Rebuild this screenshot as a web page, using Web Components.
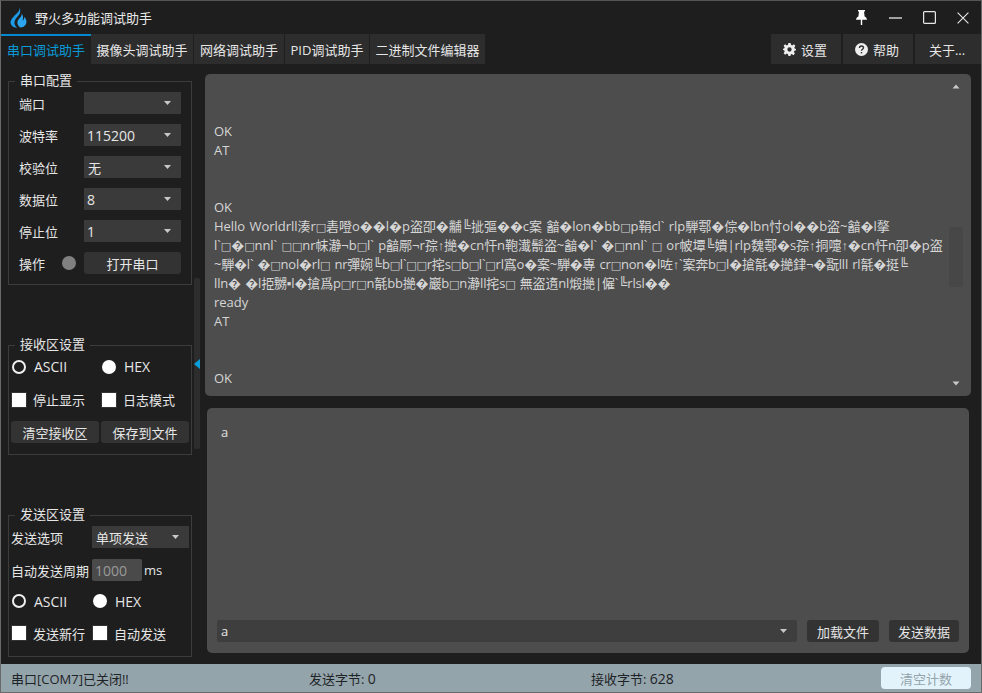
<!DOCTYPE html>
<html lang="zh"><head><meta charset="utf-8"><title>野火多功能调试助手</title>
<style>
html,body{margin:0;padding:0;height:100%;background:#1e1e1e;overflow:hidden}
body{font:13px "Open Sans","Noto Sans CJK SC",sans-serif;color:#e6e6e6}
</style></head><body>
<app-window>
  <title-bar slot="title">野火多功能调试助手</title-bar>
  <tab-bar slot="tabs"></tab-bar>
  <side-bar slot="side">
    <side-group label="串口配置" h="204">
      <form-grid cols="65px 97px" gap="10">
        <span>端口</span><combo-box></combo-box>
        <span>波特率</span><combo-box num>115200</combo-box>
        <span>校验位</span><combo-box>无</combo-box>
        <span>数据位</span><combo-box num>8</combo-box>
        <span>停止位</span><combo-box num>1</combo-box>
        <status-op>操作</status-op><action-btn>打开串口</action-btn>
      </form-grid>
    </side-group>
    <side-group label="接收区设置" h="110" top="60" pad="4">
      <opt-row first="90" h="33"><radio-opt ring>ASCII</radio-opt><radio-opt>HEX</radio-opt></opt-row>
      <opt-row first="90" h="33"><check-opt>停止显示</check-opt><check-opt>日志模式</check-opt></opt-row>
      <btn-row><action-btn>清空接收区</action-btn><action-btn>保存到文件</action-btn></btn-row>
    </side-group>
    <side-group label="发送区设置" h="142" top="60" pad="10">
      <send-row><span>发送选项</span><combo-box>单项发送</combo-box></send-row>
      <send-row last><span>自动发送周期</span><num-input>1000</num-input><span class="ms">ms</span></send-row>
      <opt-row first="81" h="32"><radio-opt ring>ASCII</radio-opt><radio-opt>HEX</radio-opt></opt-row>
      <opt-row first="81" h="32"><check-opt>发送新行</check-opt><check-opt>自动发送</check-opt></opt-row>
    </side-group>
  </side-bar>
  <recv-panel slot="recv"></recv-panel>
  <send-panel slot="send"></send-panel>
  <status-bar slot="status"></status-bar>
</app-window>
<script>
function def(name, css, html, init){
  customElements.define(name, class extends HTMLElement{
    constructor(){super();const r=this.attachShadow({mode:'open'});r.innerHTML='<style>'+css+'</style>'+(typeof html==='function'?html(this):html);}
    connectedCallback(){ if(init) init(this); }
  });
}
const caret='<svg width="7" height="4" viewBox="0 0 7 4"><path d="M0 0h7L3.500 4z" fill="#c8c8c8"/></svg>';

def('app-window',`
:host{display:flex;flex-direction:column;box-sizing:border-box;width:982px;height:693px;border:1px solid #6a6a6a;border-top-color:#555;background:#1e1e1e}
.main{flex:1;display:flex;min-height:0}
.content{flex:1;display:flex;flex-direction:column;min-width:0}
`,`<slot name="title"></slot><slot name="tabs"></slot>
<div class="main"><slot name="side"></slot><div class="content"><slot name="recv"></slot><slot name="send"></slot></div></div>
<slot name="status"></slot>`);

def('title-bar',`
:host{display:flex;align-items:center;height:33px;background:#1e1e1e;color:#e8e8e8;font-size:13px;padding-right:1px}
.logo{margin:0 8px 0 9px;display:block}
.t{flex:1}
.b{width:34px;height:33px;display:flex;align-items:center;justify-content:center}
.b svg{display:block}
`,`<svg class="logo" width="17" height="21" viewBox="0 0 17 21"><path d="M9.600 0C10.300 3.600 7.600 5.400 4.600 8.600 1.600 11.600 0 14 .6 16.400 1.400 19.200 4 20.800 7.600 20.800 4.800 19 3.400 15.800 5.400 12.400 6.800 10 9.800 8.200 10.200 4.800 10.400 3 10.200 1.400 9.600 0z" fill="#1d9be6"/><path d="M11.600 6.200C12.400 9.400 9.400 10.800 8 13.200 6.600 15.600 7.800 19 10.600 20.600 14.200 20.200 16.800 17.400 16.400 14 16.200 12.400 15.400 11 14.200 9.800 14.400 11.600 13.800 13 12.600 13.600 13.400 11 13.200 8.200 11.600 6.200z" fill="#2aa5ee"/></svg>
<span class="t"><slot></slot></span>
<span class="b"><svg width="11" height="15" viewBox="0 0 11 15"><path d="M2 0h7v1.500H8L8.600 6.500C10 7.200 10.800 8.200 11 9.800H6.200V15H4.800V9.800H0C.2 8.200 1 7.200 2.400 6.500L3 1.500H2z" fill="#fff"/></svg></span>
<span class="b"><svg width="13" height="2" viewBox="0 0 13 2"><path d="M0 1h13" stroke="#e8e8e8" stroke-width="1.300"/></svg></span>
<span class="b"><svg width="13" height="13" viewBox="0 0 13 13"><rect x=".6" y=".6" width="11.800" height="11.800" rx="1" fill="none" stroke="#e8e8e8" stroke-width="1.200"/></svg></span>
<span class="b"><svg width="12" height="12" viewBox="0 0 12 12"><path d="M.6.6l10.800 10.800M11.400.6L.6 11.400" stroke="#e8e8e8" stroke-width="1.100"/></svg></span>`);

def('tab-bar',`
:host{display:flex;height:31px;background:#1e1e1e;gap:1px;color:#e6e6e6}
.tab{display:flex;align-items:center;justify-content:center;background:#2d2d2d;height:30px;box-sizing:border-box;flex:none}
.on{width:90px;background:#1e1e1e;color:#0a9ad8;border-top:2px solid #0288d1;margin-right:-1px;padding-bottom:1px}
.sp{flex:1}
.r{gap:5px}
svg{display:block}
`,`<div class="tab on">串口调试助手</div>
<div class="tab" style="width:102px">摄像头调试助手</div>
<div class="tab" style="width:90px">网络调试助手</div>
<div class="tab" style="width:84px">PID调试助手</div>
<div class="tab" style="width:115px">二进制文件编辑器</div>
<div class="sp"></div>
<div class="tab r" style="width:70px;margin-right:1px;padding-right:2px"><svg width="13" height="13" viewBox="0 0 24 24"><path fill="#efefef" fill-rule="evenodd" d="M10 0h4l.7 3.400 2.300 1 3-1.900 2.800 2.800-1.900 3 1 2.300L25 11v2l-3.900 1.300-1 2.300 1.900 3-2.800 2.800-3-1.900-2.300 1L14 24h-4l-.7-3.400-2.300-1-3 1.900-2.800-2.800 1.900-3-1-2.300L-1 13v-2l3.100-.7 1-2.300-1.900-3L4 2.500l3 1.900 2.300-1zM12 8a4 4 0 100 8 4 4 0 000-8z"/></svg>设置</div>
<div class="tab r" style="width:70px;margin-right:1px;padding-right:2px"><svg width="13" height="13" viewBox="0 0 13 13"><circle cx="6.500" cy="6.500" r="6.500" fill="#efefef"/><path d="M4.500 5c0-1.200.9-2 2-2s2 .8 2 1.800c0 1.500-2 1.500-2 3" fill="none" stroke="#2d2d2d" stroke-width="1.400"/><rect x="5.800" y="9" width="1.400" height="1.400" fill="#2d2d2d"/></svg>帮助</div>
<div class="tab" style="width:66px;padding-right:2px">关于...</div>`);

def('side-bar',`
:host{display:block;position:relative;width:204px;flex:none;box-sizing:border-box;padding:16px 0 0 7px;color:#e6e6e6}
.thumb{position:absolute;left:193px;top:213px;width:6px;height:171px;background:#2d2d2d;border-radius:2px}
.tri{position:absolute;left:193px;top:294px;width:0;height:0;border:5px solid transparent;border-left:0;border-right:6px solid #0aa0dc}
`,`<slot></slot><div class="thumb"></div><div class="tri"></div>`);

def('side-group',`
:host{display:block;position:relative;box-sizing:border-box;width:184px;border:1px solid #3c3c3c;padding:10px 9px 0 10px}
:host([pad]){padding-left:2px;padding-right:1px}
.l{position:absolute;top:-11px;left:6px;background:#1e1e1e;padding:0 5px;line-height:18px}
`,h=>`<div class="l">${h.getAttribute('label')}</div><slot></slot>`,h=>{
  h.style.height=h.getAttribute('h')+'px';
  if(h.getAttribute('top'))h.style.marginTop=h.getAttribute('top')+'px';
  if(h.getAttribute('pad'))h.style.paddingTop=h.getAttribute('pad')+'px';
});

def('form-grid',`
:host{display:grid;align-items:center;grid-auto-rows:22px;height:max-content}
`,`<slot></slot>`,h=>{h.style.gridTemplateColumns=h.getAttribute('cols');h.style.rowGap=h.getAttribute('gap')+'px';});

def('combo-box',`
:host{display:flex;align-items:center;justify-content:space-between;box-sizing:border-box;height:22px;background:#3a3a3a;padding:0 10px 0 4px;color:#e6e6e6}
:host([num]){font-size:14px;padding-left:3px}
svg{display:block;flex:none}
`,`<span><slot></slot></span>${caret}`);

def('num-input',`
:host{display:flex;align-items:center;box-sizing:border-box;width:50px;height:22px;background:#4a4a4a;color:#9a9a9a;padding-left:3px;border-radius:2px;flex:none;font-size:14px}
`,`<slot></slot>`);

def('action-btn',`
:host{display:flex;align-items:center;justify-content:center;height:22px;box-sizing:border-box;background:#333;border-radius:3px;color:#e6e6e6}
`,`<slot></slot>`);

def('status-op',`
:host{display:flex;align-items:center;justify-content:space-between;padding-right:8px}
i{display:block;width:14px;height:14px;border-radius:50%;background:#808080}
`,`<span><slot></slot></span><i></i>`);

def('opt-row',`
:host{display:grid;align-items:center;padding-left:1px}
`,`<slot></slot>`,h=>{h.style.gridTemplateColumns=h.getAttribute('first')+'px 1fr';h.style.height=h.getAttribute('h')+'px';});

def('btn-row',`
:host{display:grid;grid-template-columns:88px 88px;column-gap:2px;margin-top:5px}
`,`<slot></slot>`);

def('radio-opt',`
:host{display:flex;align-items:center;gap:8px;height:16px;font-size:14px}
i{display:block;box-sizing:border-box;width:14px;height:14px;border-radius:50%;background:#fff}
:host([ring]) i{background:#1e1e1e;border:2px solid #f0f0f0}
`,`<i></i><span><slot></slot></span>`);

def('check-opt',`
:host{display:flex;align-items:center;gap:6px;height:16px}
i{display:block;width:14px;height:14px;background:#fff;border:1px solid #333;box-sizing:content-box;margin:0 -1px}
span{margin-left:1px}
`,`<i></i><span><slot></slot></span>`);

def('send-row',`
:host{display:flex;align-items:center;height:22px;margin-bottom:11px;white-space:nowrap}
:host([last]){margin-bottom:4px}
::slotted(span:first-child){width:81px;flex:none}
::slotted(combo-box){width:97px}
::slotted(.ms){margin-left:2px}
`,`<slot></slot>`);

const L=[
"","","","","OK","AT","","","OK",
"Hello Worldrll湊r\u25a1砉噔o\ufffd\ufffdl\ufffdp盗卲\ufffd黼\u255a㧗彄\ufffd\ufffdc案 韽\ufffdlon\ufffdbb\u25a1p鞙cl` rlp騨鄠\ufffd倧\ufffdlbn忖ol\ufffd\ufffdb盗~韽\ufffdl摮",
"l`\u25a1\ufffd\u25a1nnl` \u25a1\u25a1nr帓瀞\u00acb\u25a1l` p韽鄏\u00acr孮\u2191撧\ufffdcn忓n鞄瀐鬋盗~韽\ufffdl` \ufffd\u25a1nnl` \u25a1 or帔墰\u255a嬇|rlp魏鄠\ufffds孮\u2191挏嚏\u2191\ufffdcn忓n卲\ufffdp盗",
"~騨\ufffdl` \ufffd\u25a1nol\ufffdrl\u25a1 nr彈婉\u255ab\u25a1l`\u25a1\u25a1r挓s\u25a1b\u25a1l`\u25a1rl寪o\ufffd案~騨\ufffd專 cr\u25a1non\ufffdl咗\u2191`案奔b\u25a1l\ufffd搶毻\ufffd撧銉\u00ac\ufffd翫lll rl毻\ufffd挺\u255a",
"lln\ufffd \ufffdl挋嬲\u25aal\ufffd搶爲p\u25a1r\u25a1n毻bb撧\ufffd巖b\u25a1n瀞ll挓s\u25a1 無盗遀nl煅撧|僱`\u255arlsl\ufffd\ufffd",
"ready","AT","","","OK"];
const line=x=>x.replace(/\u25a1/g,'<span class="q">\u25a1</span>');

def('recv-panel',`
:host{display:block;position:relative;box-sizing:border-box;height:322px;margin:9px 10px 0 0;background:#4d4d4d;border-radius:5px;overflow:hidden;color:#d6d6d6;font-family:"Open Sans","Liberation Sans","Noto Sans CJK SC",sans-serif}
.t{padding:0 0 0 9px;margin-top:-28px}
.l{height:19px;line-height:19px;white-space:pre;word-spacing:1px}
.q{font-family:"DejaVu Sans",sans-serif;font-size:11px}
.l:nth-child(10){letter-spacing:-.03px}
.l:nth-child(11){letter-spacing:-.04px}
.l:nth-child(12){letter-spacing:-.2px}
.l:nth-child(13){letter-spacing:-.15px}
.th{position:absolute;left:744px;top:153px;width:14px;height:60px;background:#474747;border-radius:2px}
.up,.dn{position:absolute;left:747px;display:block}
.up{top:10px}.dn{top:307px}
`,`<div class="t">${L.map(x=>`<div class="l">${line(x)||' '}</div>`).join('')}</div><div class="th"></div>
<svg class="up" width="8" height="5" viewBox="0 0 8 5"><path d="M4 .5L7.500 4.500H.5z" fill="#c8c8c8"/></svg>
<svg class="dn" width="8" height="5" viewBox="0 0 8 5"><path d="M.5.5h7L4 4.500z" fill="#c8c8c8"/></svg>`);

def('send-panel',`
:host{display:flex;flex-direction:column;box-sizing:border-box;height:245px;margin:12px 12px 0 2px;background:#4d4d4d;border-radius:5px;color:#e6e6e6;padding:15px 10px 11px 14px}
.v{flex:1;font-size:13px;color:#e0e0e0}
.r{display:flex;align-items:center;gap:10px;height:22px;margin-left:-4px}
.c{flex:1;margin-right:0;height:22px;background:#3e3e3e;display:flex;align-items:center;justify-content:space-between;padding:0 10px 0 4px;border-radius:2px}
.c svg{display:block}
.b{width:72px;height:22px;display:flex;align-items:center;justify-content:center;background:#333;border-radius:3px;flex:none}
.b + .b{width:70px}
`,`<div class="v">a</div><div class="r"><div class="c"><span>a</span>${caret}</div><div class="b">加载文件</div><div class="b">发送数据</div></div>`);

def('status-bar',`
:host{display:flex;align-items:center;height:28px;background:#94a4ab;color:#1e2326;flex:none}
.a{width:298px;padding-left:10px;box-sizing:border-box;flex:none}
.b{width:282px;flex:none;padding-left:10px;box-sizing:border-box}
.c{flex:1;padding-left:10px;box-sizing:border-box}
.n{font-size:14px}
.d{width:90px;height:22px;margin-right:10px;background:#e3f3fb;color:#94a4ab;border-radius:4px;display:flex;align-items:center;justify-content:center;flex:none}
`,`<div class="a">串口[COM7]已关闭!!</div><div class="b">发送字节: <span class="n">0</span></div><div class="c">接收字节: <span class="n">628</span></div><div class="d">清空计数</div>`);
</script>
</body></html>
